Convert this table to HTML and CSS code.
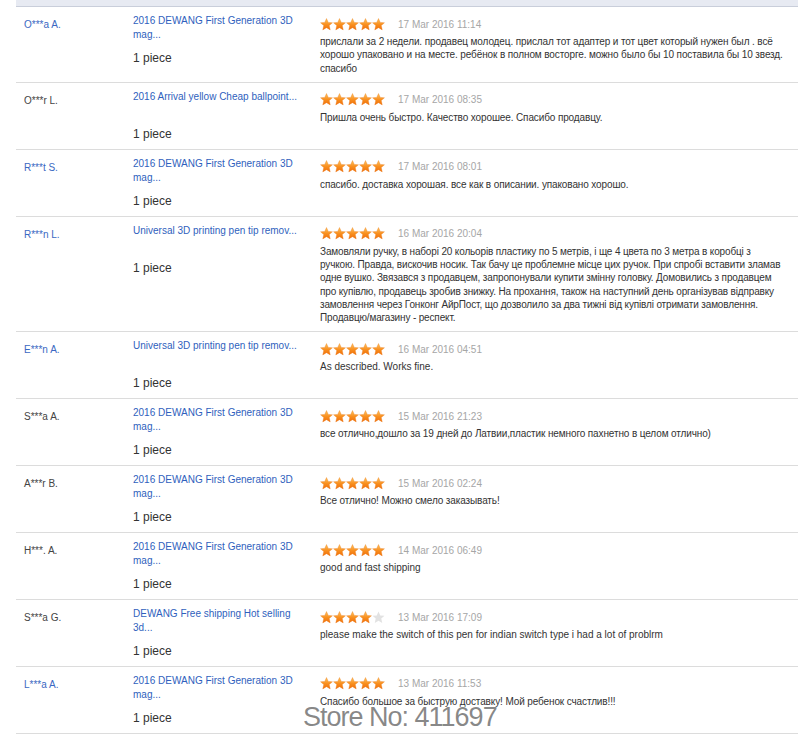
FILE: index.html
```html
<!DOCTYPE html>
<html lang="en">
<head>
    <meta charset="UTF-8">
    <meta name="viewport" content="width=device-width, initial-scale=1.0">
    <title>Feedback</title>
    <link rel="stylesheet" href="styles.css">
</head>
<body>

    <svg class="svg-defs" aria-hidden="true">
        <defs>
            <linearGradient id="starGrad" x1="0" y1="0" x2="0" y2="1">
                <stop offset="0" stop-color="#ffc45e"/>
                <stop offset="0.55" stop-color="#f88d1d"/>
                <stop offset="1" stop-color="#ef6f0c"/>
            </linearGradient>
            <symbol id="star" viewBox="0 0 24 24">
                <polygon points="12,1 15.2,8.1 23,8.8 17.1,14 18.9,22 12,17.8 5.1,22 6.9,14 1,8.8 8.8,8.1"/>
            </symbol>
        </defs>
    </svg>

    <div class="feedback-list">
        <div class="feedback-head"></div>

        <div class="feedback-row">
            <div class="buyer buyer-link">O***a A.</div>
            <div class="product">
                <a class="product-title" href="#">2016 DEWANG First Generation 3D mag...</a>
                <div class="qty">1 piece</div>
            </div>
            <div class="review">
                <div class="review-meta">
                    <span class="stars"><svg class="on"><use href="#star"/></svg><svg class="on"><use href="#star"/></svg><svg class="on"><use href="#star"/></svg><svg class="on"><use href="#star"/></svg><svg class="on"><use href="#star"/></svg></span>
                    <span class="date">17 Mar 2016 11:14</span>
                </div>
                <p class="review-text" lang="ru">прислали за 2 недели. продавец молодец. прислал тот адаптер и тот цвет который нужен был . всё хорошо упаковано и на месте. ребёнок в полном восторге. можно было бы 10 поставила бы 10 звезд. спасибо</p>
            </div>
        </div>

        <div class="feedback-row">
            <div class="buyer">O***r L.</div>
            <div class="product">
                <a class="product-title" href="#">2016 Arrival yellow Cheap ballpoint...</a>
                <div class="qty">1 piece</div>
            </div>
            <div class="review">
                <div class="review-meta">
                    <span class="stars"><svg class="on"><use href="#star"/></svg><svg class="on"><use href="#star"/></svg><svg class="on"><use href="#star"/></svg><svg class="on"><use href="#star"/></svg><svg class="on"><use href="#star"/></svg></span>
                    <span class="date">17 Mar 2016 08:35</span>
                </div>
                <p class="review-text" lang="ru">Пришла очень быстро. Качество хорошее. Спасибо продавцу.</p>
            </div>
        </div>

        <div class="feedback-row">
            <div class="buyer buyer-link">R***t S.</div>
            <div class="product">
                <a class="product-title" href="#">2016 DEWANG First Generation 3D mag...</a>
                <div class="qty">1 piece</div>
            </div>
            <div class="review">
                <div class="review-meta">
                    <span class="stars"><svg class="on"><use href="#star"/></svg><svg class="on"><use href="#star"/></svg><svg class="on"><use href="#star"/></svg><svg class="on"><use href="#star"/></svg><svg class="on"><use href="#star"/></svg></span>
                    <span class="date">17 Mar 2016 08:01</span>
                </div>
                <p class="review-text" lang="ru">спасибо. доставка хорошая. все как в описании. упаковано хорошо.</p>
            </div>
        </div>

        <div class="feedback-row">
            <div class="buyer buyer-link">R***n L.</div>
            <div class="product">
                <a class="product-title" href="#">Universal 3D printing pen tip remov...</a>
                <div class="qty">1 piece</div>
            </div>
            <div class="review">
                <div class="review-meta">
                    <span class="stars"><svg class="on"><use href="#star"/></svg><svg class="on"><use href="#star"/></svg><svg class="on"><use href="#star"/></svg><svg class="on"><use href="#star"/></svg><svg class="on"><use href="#star"/></svg></span>
                    <span class="date">16 Mar 2016 20:04</span>
                </div>
                <p class="review-text" lang="uk">Замовляли ручку, в наборі 20 кольорів пластику по 5 метрів, і ще 4 цвета по 3 метра в коробці з<br>
                ручкою. Правда, вискочив носик. Так бачу це проблемне місце цих ручок. При спробі вставити зламав<br>
                одне вушко. Звязався з продавцем, запропонували купити змінну головку. Домовились з продавцем<br>
                про купівлю, продавець зробив знижку. На прохання, також на наступний день організував відправку<br>
                замовлення через Гонконг АйрПост, що дозволило за два тижні від купівлі отримати замовлення.<br>
                Продавцю/магазину - респект.</p>
            </div>
        </div>

        <div class="feedback-row">
            <div class="buyer buyer-link">E***n A.</div>
            <div class="product">
                <a class="product-title" href="#">Universal 3D printing pen tip remov...</a>
                <div class="qty">1 piece</div>
            </div>
            <div class="review">
                <div class="review-meta">
                    <span class="stars"><svg class="on"><use href="#star"/></svg><svg class="on"><use href="#star"/></svg><svg class="on"><use href="#star"/></svg><svg class="on"><use href="#star"/></svg><svg class="on"><use href="#star"/></svg></span>
                    <span class="date">16 Mar 2016 04:51</span>
                </div>
                <p class="review-text">As described. Works fine.</p>
            </div>
        </div>

        <div class="feedback-row">
            <div class="buyer">S***a A.</div>
            <div class="product">
                <a class="product-title" href="#">2016 DEWANG First Generation 3D mag...</a>
                <div class="qty">1 piece</div>
            </div>
            <div class="review">
                <div class="review-meta">
                    <span class="stars"><svg class="on"><use href="#star"/></svg><svg class="on"><use href="#star"/></svg><svg class="on"><use href="#star"/></svg><svg class="on"><use href="#star"/></svg><svg class="on"><use href="#star"/></svg></span>
                    <span class="date">15 Mar 2016 21:23</span>
                </div>
                <p class="review-text" lang="ru">все отлично,дошло за 19 дней до Латвии,пластик немного пахнетно в целом отлично)</p>
            </div>
        </div>

        <div class="feedback-row">
            <div class="buyer">A***r B.</div>
            <div class="product">
                <a class="product-title" href="#">2016 DEWANG First Generation 3D mag...</a>
                <div class="qty">1 piece</div>
            </div>
            <div class="review">
                <div class="review-meta">
                    <span class="stars"><svg class="on"><use href="#star"/></svg><svg class="on"><use href="#star"/></svg><svg class="on"><use href="#star"/></svg><svg class="on"><use href="#star"/></svg><svg class="on"><use href="#star"/></svg></span>
                    <span class="date">15 Mar 2016 02:24</span>
                </div>
                <p class="review-text" lang="ru">Все отлично! Можно смело заказывать!</p>
            </div>
        </div>

        <div class="feedback-row">
            <div class="buyer">H***. A.</div>
            <div class="product">
                <a class="product-title" href="#">2016 DEWANG First Generation 3D mag...</a>
                <div class="qty">1 piece</div>
            </div>
            <div class="review">
                <div class="review-meta">
                    <span class="stars"><svg class="on"><use href="#star"/></svg><svg class="on"><use href="#star"/></svg><svg class="on"><use href="#star"/></svg><svg class="on"><use href="#star"/></svg><svg class="on"><use href="#star"/></svg></span>
                    <span class="date">14 Mar 2016 06:49</span>
                </div>
                <p class="review-text">good and fast shipping</p>
            </div>
        </div>

        <div class="feedback-row">
            <div class="buyer">S***a G.</div>
            <div class="product">
                <a class="product-title" href="#">DEWANG Free shipping Hot selling 3d...</a>
                <div class="qty">1 piece</div>
            </div>
            <div class="review">
                <div class="review-meta">
                    <span class="stars"><svg class="on"><use href="#star"/></svg><svg class="on"><use href="#star"/></svg><svg class="on"><use href="#star"/></svg><svg class="on"><use href="#star"/></svg><svg class="off"><use href="#star"/></svg></span>
                    <span class="date">13 Mar 2016 17:09</span>
                </div>
                <p class="review-text">please make the switch of this pen for indian switch type i had a lot of problrm</p>
            </div>
        </div>

        <div class="feedback-row">
            <div class="buyer buyer-link">L***a A.</div>
            <div class="product">
                <a class="product-title" href="#">2016 DEWANG First Generation 3D mag...</a>
                <div class="qty">1 piece</div>
            </div>
            <div class="review">
                <div class="review-meta">
                    <span class="stars"><svg class="on"><use href="#star"/></svg><svg class="on"><use href="#star"/></svg><svg class="on"><use href="#star"/></svg><svg class="on"><use href="#star"/></svg><svg class="on"><use href="#star"/></svg></span>
                    <span class="date">13 Mar 2016 11:53</span>
                </div>
                <p class="review-text" lang="ru">Спасибо большое за быструю доставку! Мой ребенок счастлив!!!</p>
            </div>
        </div>
    </div>

    <div class="watermark">Store No: 411697</div>

</body>
</html>
```

FILE: styles.css
```css
body {
    margin: 0;
    background-color: #fff;
    font-family: "Liberation Sans", Arial, sans-serif;
    font-size: 10px;
    color: #333;
    position: relative;
}

.svg-defs {
    position: absolute;
    width: 0;
    height: 0;
}

.feedback-list {
    margin-left: 16px;
    width: 782px;
}

.feedback-head {
    height: 6px;
    background-color: #e7eaf2;
    border-bottom: 1px solid #c9ceda;
}

.feedback-row {
    display: grid;
    grid-template-columns: 109px 187px 1fr;
    border-bottom: 1px solid #dcdcdc;
}

.buyer {
    padding: 11px 0 0 8px;
    line-height: 14px;
    color: #444;
}

.buyer-link {
    color: #3a68c2;
}

.product {
    padding: 7px 9px 6.9px 8px;
}

.product-title {
    display: block;
    height: 28px;
    line-height: 14px;
    color: #2f5fbd;
    text-decoration: none;
}

.qty {
    margin-top: 8px;
    line-height: 16px;
    font-size: 12px;
    color: #333;
}

.review {
    padding: 10px 6px 7px 8px;
}

.review-meta {
    display: flex;
    align-items: center;
    height: 14px;
}

.stars {
    display: flex;
    width: 65px;
}

.stars svg {
    width: 13px;
    height: 13px;
}

.stars .on {
    fill: url(#starGrad);
    stroke: #e8730e;
    stroke-width: 0.6;
}

.stars .off {
    fill: #e2e2e2;
}

.date {
    margin-left: 13px;
    color: #a6a6a6;
}

.review-text {
    margin: 4px 0 0 0;
    line-height: 13.3px;
    color: #333;
}

.review-text:lang(ru) {
    letter-spacing: -0.12px;
}

.review-text:lang(uk) {
    letter-spacing: -0.15px;
}

.watermark {
    position: absolute;
    left: 303px;
    top: 702px;
    font-size: 27px;
    line-height: 31px;
    letter-spacing: -1px;
    color: rgba(115, 115, 115, 0.85);
    text-shadow: 0 0 2px #fff, 0 0 1px #fff;
    white-space: nowrap;
}
```
